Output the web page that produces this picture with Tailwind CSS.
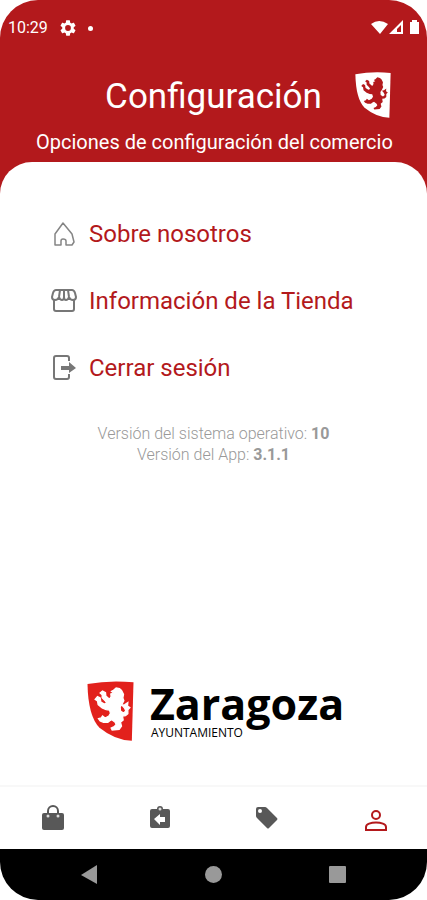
<!DOCTYPE html>
<html lang="es">
<head>
<meta charset="utf-8">
<meta name="viewport" content="width=device-width, initial-scale=1">
<title>Configuración</title>
<script src="https://cdn.jsdelivr.net/npm/@tailwindcss/browser@4"></script>
</head>
<body class="bg-white font-['Roboto',sans-serif]">
<svg class="hidden" aria-hidden="true">
  <symbol id="shield" viewBox="22 34 138 180"><path d="M22 43Q88 31 160 38L155 213Q105 212 58 174Q24 140 22 43Z"/></symbol>
  <symbol id="lion" viewBox="22 34 138 180"><path d="M100 62L108 55L118 57L124 62L130 74L128 85L131 93L126 103L120 112L121 124L130 130L137 124L133 115L126 107L134 105L143 99L142 109L149 114L143 120L143 132L136 138L127 139L129 151L121 158L124 169L117 179L96 181L93 175L102 171L108 164L105 158L95 150L89 153L83 158L70 158L60 154L55 147L63 145L67 139L75 145L86 139L91 131L88 121L78 120L66 115L54 105L52 94L45 89L52 81L60 85L62 97L73 103L80 101L75 93L66 84L66 75L60 70L67 64L76 69L77 79L88 89L93 81L92 73L100 70L94 65Z"/></symbol>
</svg>
<div class="flex min-h-screen flex-col">
  <div class="flex flex-1 flex-col rounded-t-[38px] bg-[#b3191c]">
    <div class="flex h-14 items-center justify-between px-2 text-white">
      <div class="flex items-center gap-3">
        <span class="text-base">10:29</span>
        <svg class="size-4" viewBox="2 2 20 20" fill="currentColor" aria-hidden="true"><path d="M19.14 12.94c.04-.3.06-.61.06-.94s-.02-.64-.07-.94l2.03-1.58a.49.49 0 0 0 .12-.61l-1.92-3.32a.49.49 0 0 0-.59-.22l-2.39.96c-.5-.38-1.03-.7-1.62-.94l-.36-2.54a.48.48 0 0 0-.48-.41h-3.84c-.24 0-.43.17-.47.41l-.36 2.54c-.59.24-1.13.57-1.62.94l-2.39-.96a.48.48 0 0 0-.59.22L2.74 8.87c-.12.21-.08.47.12.61l2.03 1.58c-.05.3-.09.63-.09.94s.02.64.07.94l-2.03 1.58a.49.49 0 0 0-.12.61l1.92 3.32c.12.22.37.29.59.22l2.39-.96c.5.38 1.03.7 1.62.94l.36 2.54c.05.24.24.41.48.41h3.84c.24 0 .44-.17.47-.41l.36-2.54c.59-.24 1.13-.56 1.62-.94l2.39.96c.22.08.47 0 .59-.22l1.92-3.32a.49.49 0 0 0-.12-.61zM12 15.6a3.6 3.6 0 1 1 0-7.2 3.6 3.6 0 0 1 0 7.2z"/></svg>
        <span class="size-[5px] rounded-full bg-white"></span>
      </div>
      <svg class="h-4 w-12" viewBox="0 0 48 16" fill="currentColor" aria-hidden="true"><path d="M0 4Q8-2 17 4L9 14ZM32 0V14H18ZM30 5L26 9V12H30ZM39 2H41V0H46V2H48V14H39V2Z" fill-rule="evenodd"/></svg>
    </div>
    <header class="flex flex-col px-9 pb-1 text-white">
      <div class="grid grid-cols-[36px_1fr_36px] items-start pt-4">
        <h1 class="col-start-2 text-center text-[35px] leading-[50px]">Configuración</h1>
        <svg class="h-[46px] w-9" aria-label="Escudo de Zaragoza" role="img"><use href="#shield" fill="#fff"/><use href="#lion" fill="#b3191c"/></svg>
      </div>
      <p class="pt-1 text-center text-xl leading-8 whitespace-nowrap">Opciones de configuración del comercio</p>
    </header>
    <main class="flex flex-1 flex-col rounded-t-[32px] bg-white">
      <nav class="flex flex-col gap-[27px] px-[52px] pt-[52px]" aria-label="Opciones">
        <a href="#nosotros" class="flex h-10 items-center gap-[13px] text-2xl text-[#b3191c]">
          <svg class="size-6 text-[#858585]" viewBox="0 0 24 24" fill="none" stroke="currentColor" stroke-width="1.5" stroke-linejoin="round" aria-hidden="true"><path d="M3 12L11 1L20 12L22 20L20 23H14V19Q14 17 11 17Q9 17 9 19V23H3Z"/></svg>
          Sobre nosotros</a>
        <a href="#tienda" class="flex h-10 items-center gap-[13px] text-2xl text-[#b3191c]">
          <svg class="size-6 overflow-visible text-[#777]" viewBox="0 0 24 24" fill="none" stroke="currentColor" stroke-width="2" stroke-linejoin="round" aria-hidden="true"><path d="M4 1H20Q22 1 23 4L24 8Q24 11 21 11Q18 11 17 8Q16 11 14 11Q12 11 12 8Q12 11 10 11Q8 11 7 8Q6 11 3 11Q0 11 0 8L1 4Q2 1 4 1ZM8 1L7 8M12 1V8M16 1L17 8M2 11V20Q2 22 4 22H20Q22 22 22 20V11"/></svg>
          Información de la Tienda</a>
        <a href="#salir" class="flex h-10 items-center gap-[13px] text-2xl text-[#b3191c]">
          <svg class="size-6 overflow-visible text-[#777]" viewBox="0 0 24 24" fill="none" stroke="currentColor" stroke-width="2" aria-hidden="true"><path d="M17 5V2Q17 0 15 0H4Q2 0 2 2V21Q2 23 4 23H15Q17 23 17 21V18"/><path d="M9 10H17V6L24 12L17 17V14H9Z" fill="currentColor" stroke="none"/></svg>
          Cerrar sesión</a>
      </nav>
      <div class="pt-[35px] text-center text-base leading-[21px] font-light text-[#999]">
        <p>Versión del sistema operativo: <strong class="font-bold">10</strong></p>
        <p>Versión del App: <strong class="font-bold">3.1.1</strong></p>
      </div>
      <div class="mt-auto flex justify-center gap-4 pb-11 pl-1">
        <svg class="h-[60px] w-[47px]" role="img" aria-label="Escudo"><use href="#shield" fill="#e2211c"/><use href="#lion" fill="#fff" stroke="#fff" stroke-width="4"/></svg>
        <div class="flex flex-col font-['Open_Sans',sans-serif] text-black">
          <span class="text-[43px] leading-[46px] font-bold">Zaragoza</span>
          <span class="pl-px text-xs leading-3">AYUNTAMIENTO</span>
        </div>
      </div>
      <nav class="grid h-16 grid-cols-4 border-t-2 border-[#f8f8f8] text-[#585858]" aria-label="Secciones">
        <button class="flex items-center justify-center" aria-label="Comercio"><svg class="h-[26px] w-6" viewBox="0 0 24 26"><path d="M7 10V6A5 5 0 0 1 17 6V10" fill="none" stroke="currentColor" stroke-width="2"/><rect x="1" y="8" width="22" height="17" rx="2" fill="currentColor"/><circle cx="7" cy="11" r="1.5" fill="#ddd"/><circle cx="17" cy="11" r="1.5" fill="#ddd"/></svg></button>
        <button class="flex items-center justify-center" aria-label="Devoluciones"><svg class="h-6 w-5" viewBox="0 0 20 24"><path d="M2 3H7A3 3 0 0 1 13 3H18Q20 3 20 5V20Q20 22 18 22H2Q0 22 0 20V5Q0 3 2 3Z" fill="currentColor"/><circle cx="10" cy="3" r="1.5" fill="#ddd"/><path d="M4 13L10 8V11H15V16H10V19Z" fill="#fff"/></svg></button>
        <button class="flex items-center justify-center" aria-label="Ofertas"><svg class="size-6" viewBox="0 0 24 24"><path fill-rule="evenodd" d="M3 1H10Q11 1 12 2L22 12Q23 13 22 14L14 22Q13 23 12 22L2 12Q1 11 1 10V3Q1 1 3 1ZM5 3A2 2 0 1 0 5 7A2 2 0 1 0 5 3Z" fill="currentColor"/></svg></button>
        <button class="flex items-center justify-center pl-1 text-[#b3191c]" aria-label="Perfil" aria-current="page"><svg class="mt-1 size-[22px]" viewBox="0 0 22 22" fill="none" stroke="currentColor" stroke-width="2"><circle cx="11" cy="6" r="4"/><path d="M1 21V18C1 12 21 12 21 18V21Z"/></svg></button>
      </nav>
    </main>
  </div>
  <div class="bg-white"><div class="flex h-[51px] items-center justify-around rounded-b-[38px] bg-black px-7 text-[#999]">
    <button aria-label="Atrás"><svg class="h-[19px] w-[17px]" viewBox="0 0 17 19" fill="currentColor"><path d="M16 0V19L0 10Z"/></svg></button>
    <button aria-label="Inicio"><svg class="size-[17px]" viewBox="0 0 17 17" fill="currentColor"><circle cx="8.5" cy="8.5" r="8.5"/></svg></button>
    <button aria-label="Recientes"><svg class="size-[17px]" viewBox="0 0 17 17" fill="currentColor"><rect width="17" height="17" rx="1"/></svg></button>
  </div></div>
</div>
</body>
</html>
